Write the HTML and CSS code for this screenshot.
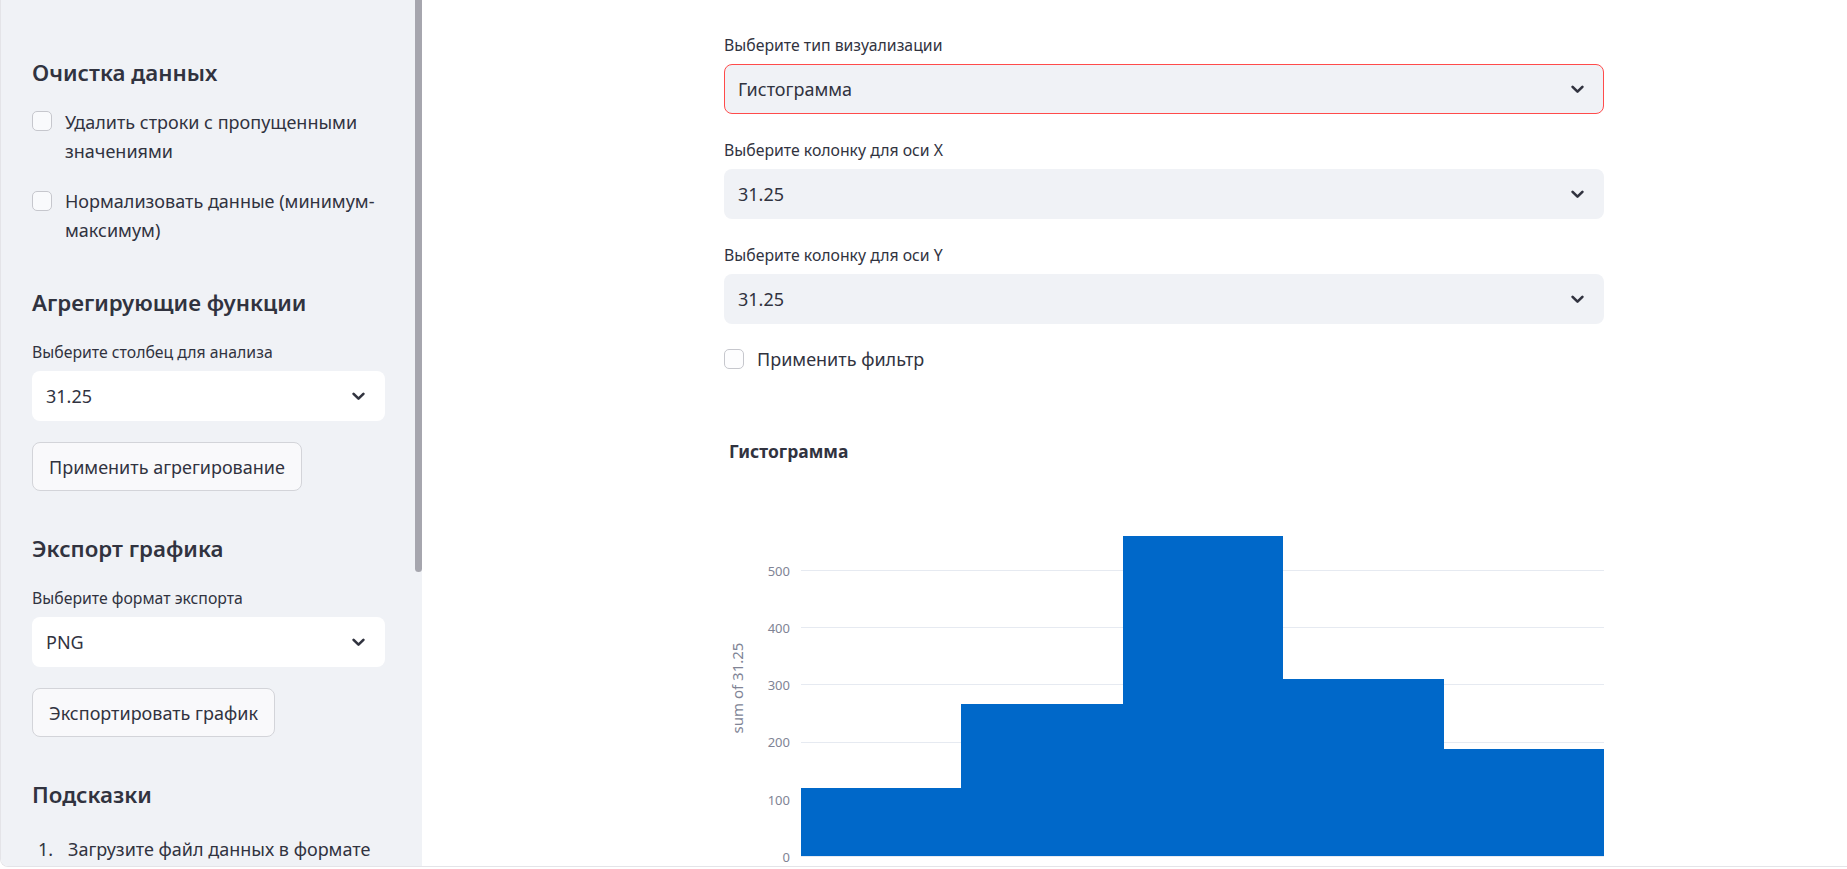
FILE: index.html
```html
<!DOCTYPE html>
<html lang="ru">
<head>
<meta charset="utf-8">
<title>Визуализация</title>
<link rel="stylesheet" href="styles.css">
</head>
<body>
<div class="app">
  <aside class="sidebar">
    <div class="thumb"></div>
    <h3 class="sb-h first">Очистка данных</h3>
    <label class="check cb1"><span class="box"></span><span class="cb-text">Удалить строки с пропущенными значениями</span></label>
    <label class="check cb2"><span class="box"></span><span class="cb-text">Нормализовать данные (минимум-максимум)</span></label>

    <h3 class="sb-h">Агрегирующие функции</h3>
    <div class="field-label">Выберите столбец для анализа</div>
    <div class="select sb-select"><span>31.25</span><svg class="chev" width="13" height="9" viewBox="0 0 13 9"><polyline points="1.6,1.8 6.5,6.7 11.4,1.8" fill="none" stroke="#31333f" stroke-width="2.6" stroke-linecap="round" stroke-linejoin="round"/></svg></div>
    <button class="btn">Применить агрегирование</button>

    <h3 class="sb-h">Экспорт графика</h3>
    <div class="field-label">Выберите формат экспорта</div>
    <div class="select sb-select"><span>PNG</span><svg class="chev" width="13" height="9" viewBox="0 0 13 9"><polyline points="1.6,1.8 6.5,6.7 11.4,1.8" fill="none" stroke="#31333f" stroke-width="2.6" stroke-linecap="round" stroke-linejoin="round"/></svg></div>
    <button class="btn">Экспортировать график</button>

    <h3 class="sb-h">Подсказки</h3>
    <div class="tip"><span class="num">1.</span><span>Загрузите файл данных в формате</span></div>
  </aside>

  <main class="main">
    <div class="content">
      <div class="field-label first">Выберите тип визуализации</div>
      <div class="select main-select active"><span>Гистограмма</span><svg class="chev" width="13" height="9" viewBox="0 0 13 9"><polyline points="1.6,1.8 6.5,6.7 11.4,1.8" fill="none" stroke="#31333f" stroke-width="2.6" stroke-linecap="round" stroke-linejoin="round"/></svg></div>

      <div class="field-label">Выберите колонку для оси X</div>
      <div class="select main-select"><span>31.25</span><svg class="chev" width="13" height="9" viewBox="0 0 13 9"><polyline points="1.6,1.8 6.5,6.7 11.4,1.8" fill="none" stroke="#31333f" stroke-width="2.6" stroke-linecap="round" stroke-linejoin="round"/></svg></div>

      <div class="field-label">Выберите колонку для оси Y</div>
      <div class="select main-select"><span>31.25</span><svg class="chev" width="13" height="9" viewBox="0 0 13 9"><polyline points="1.6,1.8 6.5,6.7 11.4,1.8" fill="none" stroke="#31333f" stroke-width="2.6" stroke-linecap="round" stroke-linejoin="round"/></svg></div>

      <label class="check main-check"><span class="box"></span><span class="cb-text">Применить фильтр</span></label>

      <div class="chart-title">Гистограмма</div>
      <svg class="chart" width="880" height="400" viewBox="0 0 880 400">
        <g stroke="#e6eaf1" stroke-width="1">
          <line x1="77" y1="100.5" x2="880" y2="100.5"/>
          <line x1="77" y1="157.5" x2="880" y2="157.5"/>
          <line x1="77" y1="214.5" x2="880" y2="214.5"/>
          <line x1="77" y1="272.5" x2="880" y2="272.5"/>
          <line x1="77" y1="329.5" x2="880" y2="329.5"/>
          <line x1="77" y1="386.5" x2="880" y2="386.5"/>
        </g>
        <g fill="#0068c9">
          <rect x="77" y="318" width="160" height="68"/>
          <rect x="237" y="234" width="162" height="152"/>
          <rect x="399" y="66" width="160" height="320"/>
          <rect x="559" y="209" width="161" height="177"/>
          <rect x="720" y="279" width="160" height="107"/>
        </g>
        <g class="ticks" text-anchor="end">
          <text x="66" y="105.5">500</text>
          <text x="66" y="162.5">400</text>
          <text x="66" y="219.5">300</text>
          <text x="66" y="277">200</text>
          <text x="66" y="334.5">100</text>
          <text x="66" y="392">0</text>
        </g>
        <text class="axis-title" x="0" y="0" transform="translate(13 218) rotate(-90)" text-anchor="middle" dominant-baseline="central">sum of 31.25</text>
      </svg>
    </div>
  </main>
</div>
</body>
</html>
```

FILE: styles.css
```css
html, body {
  margin: 0;
  padding: 0;
  background: #ffffff;
}

body {
  font-family: "Noto Sans", "DejaVu Sans", sans-serif;
  color: #31333f;
}

.app {
  display: flex;
  height: 867px;
  box-sizing: border-box;
  border-left: 1px solid #e4e4e8;
  border-bottom: 1px solid #e4e4e8;
  border-bottom-left-radius: 8px;
  overflow: hidden;
}

/* ---------- Sidebar ---------- */
.sidebar {
  position: relative;
  flex: none;
  width: 421px;
  box-sizing: border-box;
  padding: 58px 37px 0 31px;
  background: #f0f2f6;
  display: flex;
  flex-direction: column;
  align-items: stretch;
}

.thumb {
  position: absolute;
  top: 0;
  right: 0;
  width: 7px;
  height: 572px;
  background: #a6a6ae;
  border-radius: 0 0 4px 4px;
}

.sb-h {
  margin: 42.5px 0 0;
  font-size: 22.3px;
  font-weight: 600;
  line-height: 29px;
  color: #31333f;
}

.sb-h.first {
  margin-top: 0;
}

.check {
  display: flex;
  align-items: flex-start;
  gap: 13px;
  font-size: 18px;
  line-height: 29px;
}

.box {
  flex: none;
  width: 20px;
  height: 20px;
  box-sizing: border-box;
  margin-top: 3.5px;
  border: 1px solid #c6c7cd;
  border-radius: 5px;
  background: #f9fafc;
}

.cb-text {
  max-width: 322px;
}

.cb1 {
  margin-top: 20.5px;
}

.cb2 {
  margin-top: 21.5px;
}

.field-label {
  margin-top: 24px;
  font-size: 15.8px;
  line-height: 22px;
  color: #31333f;
}

.field-label.first {
  margin-top: 0;
}

.select {
  margin-top: 8.5px;
  height: 50px;
  box-sizing: border-box;
  display: flex;
  align-items: center;
  justify-content: space-between;
  padding: 0 19px 0 13px;
  border: 1px solid transparent;
  border-radius: 8px;
  font-size: 18px;
  color: #31333f;
}

.sb-select {
  background: #ffffff;
}

.main-select {
  background: #f0f2f6;
}

.select.active {
  border-color: #ff4b4b;
}

.chev {
  flex: none;
  display: block;
}

.btn {
  align-self: flex-start;
  margin-top: 21px;
  height: 49px;
  box-sizing: border-box;
  padding: 0 16px;
  border: 1px solid #d3d4d9;
  border-radius: 8px;
  background: #f9f9fb;
  font-family: inherit;
  font-size: 18px;
  color: #31333f;
}

.tip {
  margin-top: 26px;
  display: flex;
  font-size: 18px;
  line-height: 29px;
}

.num {
  flex: none;
  width: 36px;
  box-sizing: border-box;
  padding-left: 6px;
}

/* ---------- Main ---------- */
.main {
  flex: 1;
  min-width: 0;
}

.content {
  width: 880px;
  margin-left: 302px;
  padding-top: 33.5px;
  display: flex;
  flex-direction: column;
}

.content .field-label {
  margin-top: 24.5px;
}

.content .field-label.first {
  margin-top: 0;
}

.main-check {
  margin-top: 21.2px;
}

.main-check .box {
  background: #fdfdfe;
  margin-top: 4px;
}

.chart-title {
  margin-top: 65.5px;
  padding-left: 5px;
  font-size: 17.5px;
  font-weight: 700;
  line-height: 22px;
  color: #31333f;
}

.chart {
  display: block;
  margin-top: 8.3px;
  overflow: hidden;
}

.ticks {
  font-family: "Noto Sans", sans-serif;
  font-size: 13px;
  fill: #808495;
}

.axis-title {
  font-family: "Noto Sans", sans-serif;
  font-size: 15px;
  fill: #808495;
}
```
